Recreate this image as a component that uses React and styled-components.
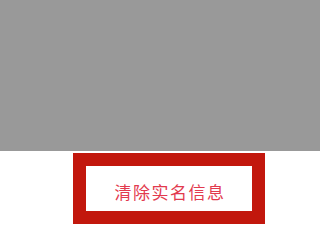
import React from "react";
import styled, { createGlobalStyle } from "styled-components";

const Global = createGlobalStyle`
  html, body {
    margin: 0;
    padding: 0;
    background: #ffffff;
    font-family: "Noto Sans CJK SC", "Liberation Serif", serif;
  }
`;

const Page = styled.div`
  width: 320px;
  height: 240px;
  display: flex;
  flex-direction: column;
  overflow: hidden;
`;

const Banner = styled.div`
  height: 151px;
  background-color: #999999;
`;

const Actions = styled.div`
  padding: 2px 0 0 73px;
`;

const ClearButton = styled.button`
  width: 192px;
  height: 71px;
  box-sizing: border-box;
  border: 13px solid #c2170d;
  background: #ffffff;
  color: #e23a4e;
  font-family: "Noto Sans CJK SC", serif;
  font-size: 17px;
  letter-spacing: 1.5px;
  padding: 5px 0 0 2px;
  display: flex;
  align-items: center;
  justify-content: center;
  cursor: pointer;
`;

export default function App() {
  return (
    <Page>
      <Global />
      <Banner />
      <Actions>
        <ClearButton>清除实名信息</ClearButton>
      </Actions>
    </Page>
  );
}
